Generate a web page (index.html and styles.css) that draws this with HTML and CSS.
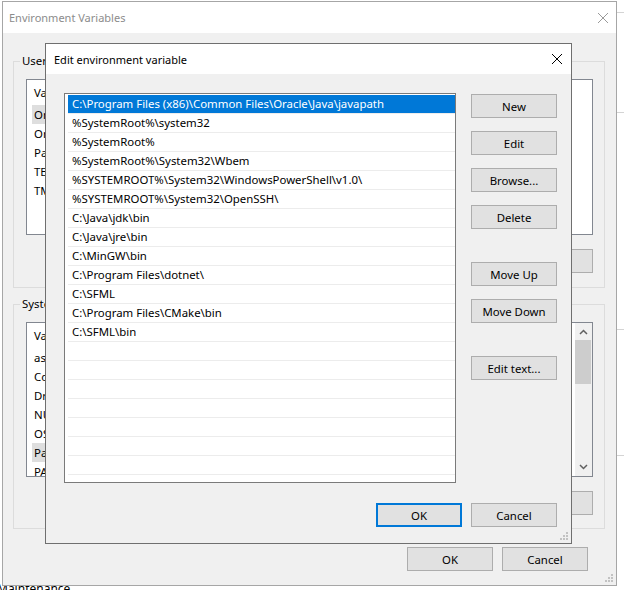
FILE: index.html
```html
<!DOCTYPE html>
<html>
<head>
	<title>Edit environment variable</title>
	<link rel="stylesheet" href="styles.css">
</head>
<body>
	<div class="desk">
		<div class="hline h1"></div>
		<div class="hline h2"></div>
		<div class="hline h3"></div>
		<div class="hline h4"></div>
		<div class="maint">Maintenance</div>

		<div class="window env">
			<div class="titlebar">
				<span class="title">Environment Variables</span>
				<svg class="close" width="10" height="10" viewBox="0 0 10 10"><path d="M0 0L10 10M10 0L0 10" stroke="#9a9a9a" stroke-width="1"/></svg>
			</div>
			<div class="env-body">
				<div class="group user">
					<span class="legend">User variables for user</span>
					<div class="varlist">
						<div class="rows">
							<div class="varhead"><span class="col1">Variable</span><span>Value</span></div>
							<div class="varrow sel"><span class="col1">OneDrive</span><span>C:\Users\user\OneDrive</span></div>
							<div class="varrow"><span class="col1">OneDriveConsumer</span><span>C:\Users\user\OneDrive</span></div>
							<div class="varrow"><span class="col1">Path</span><span>C:\Users\user\AppData\Local\Microsoft\WindowsApps;</span></div>
							<div class="varrow"><span class="col1">TEMP</span><span>C:\Users\user\AppData\Local\Temp</span></div>
							<div class="varrow"><span class="col1">TMP</span><span>C:\Users\user\AppData\Local\Temp</span></div>
						</div>
					</div>
					<div class="btnrow">
						<button class="btn">New...</button>
						<button class="btn">Edit...</button>
						<button class="btn">Delete</button>
					</div>
				</div>

				<div class="group system">
					<span class="legend">System variables</span>
					<div class="varlist">
						<div class="rows">
							<div class="varhead"><span class="col1">Variable</span><span>Value</span></div>
							<div class="varrow"><span class="col1">asl.log</span><span>Destination=file</span></div>
							<div class="varrow"><span class="col1">ComSpec</span><span>C:\WINDOWS\system32\cmd.exe</span></div>
							<div class="varrow"><span class="col1">DriverData</span><span>C:\Windows\System32\Drivers\DriverData</span></div>
							<div class="varrow"><span class="col1">NUMBER_OF_PROCESSORS</span><span>4</span></div>
							<div class="varrow"><span class="col1">OS</span><span>Windows_NT</span></div>
							<div class="varrow sel"><span class="col1">Path</span><span>C:\Program Files (x86)\Common Files\Oracle\Java\javapath;</span></div>
							<div class="varrow"><span class="col1">PATHEXT</span><span>.COM;.EXE;.BAT;.CMD;.VBS;.VBE;.JS;.JSE;.WSF;.WSH;.MSC</span></div>
						</div>
						<div class="vscroll">
							<div class="sb-btn"><svg width="17" height="17" viewBox="0 0 17 17"><path d="M5 11L8.5 7.5L12 11" fill="none" stroke="#606060" stroke-width="1.5"/></svg></div>
							<div class="sb-thumb"></div>
							<div class="sb-track"></div>
							<div class="sb-btn"><svg width="17" height="17" viewBox="0 0 17 17"><path d="M5 6L8.5 9.5L12 6" fill="none" stroke="#606060" stroke-width="1.5"/></svg></div>
						</div>
					</div>
					<div class="btnrow">
						<button class="btn">New...</button>
						<button class="btn">Edit...</button>
						<button class="btn">Delete</button>
					</div>
				</div>

				<div class="btnrow bottom">
					<button class="btn">OK</button>
					<button class="btn">Cancel</button>
				</div>
			</div>
			<svg class="grip" width="8" height="8" viewBox="0 0 8 8"><path d="M6 0h2v2h-2zM6 3h2v2h-2zM3 3h2v2h-2zM6 6h2v2h-2zM3 6h2v2h-2zM0 6h2v2h-2z" fill="#c2c2c2"/></svg>
		</div>

		<div class="window edit">
			<div class="titlebar">
				<span class="title">Edit environment variable</span>
				<svg class="close" width="10" height="10" viewBox="0 0 10 10"><path d="M0 0L10 10M10 0L0 10" stroke="#000" stroke-width="1"/></svg>
			</div>
			<div class="edit-body">
				<div class="edit-main">
					<div class="pathlist">
						<div class="pathrow sel">C:\Program Files (x86)\Common Files\Oracle\Java\javapath</div>
						<div class="pathrow">%SystemRoot%\system32</div>
						<div class="pathrow">%SystemRoot%</div>
						<div class="pathrow">%SystemRoot%\System32\Wbem</div>
						<div class="pathrow">%SYSTEMROOT%\System32\WindowsPowerShell\v1.0\</div>
						<div class="pathrow">%SYSTEMROOT%\System32\OpenSSH\</div>
						<div class="pathrow">C:\Java\jdk\bin</div>
						<div class="pathrow">C:\Java\jre\bin</div>
						<div class="pathrow">C:\MinGW\bin</div>
						<div class="pathrow">C:\Program Files\dotnet\</div>
						<div class="pathrow">C:\SFML</div>
						<div class="pathrow">C:\Program Files\CMake\bin</div>
						<div class="pathrow">C:\SFML\bin</div>
						<div class="pathrow"></div>
						<div class="pathrow"></div>
						<div class="pathrow"></div>
						<div class="pathrow"></div>
						<div class="pathrow"></div>
						<div class="pathrow"></div>
						<div class="pathrow"></div>
						<div class="pathrow"></div>
					</div>
					<div class="sidebtns">
						<button class="btn">New</button>
						<button class="btn">Edit</button>
						<button class="btn">Browse...</button>
						<button class="btn">Delete</button>
						<button class="btn sep">Move Up</button>
						<button class="btn">Move Down</button>
						<button class="btn sep">Edit text...</button>
					</div>
				</div>
				<div class="btnrow dlg">
					<button class="btn default">OK</button>
					<button class="btn">Cancel</button>
				</div>
			</div>
			<svg class="grip" width="8" height="8" viewBox="0 0 8 8"><path d="M6 0h2v2h-2zM6 3h2v2h-2zM3 3h2v2h-2zM6 6h2v2h-2zM3 6h2v2h-2zM0 6h2v2h-2z" fill="#c2c2c2"/></svg>
		</div>
	</div>
</body>
</html>
```

FILE: styles.css
```css
* {
	box-sizing: border-box;
}
body {
	margin: 0;
	font-family: "Noto Sans", "Segoe UI", sans-serif;
	font-size: 11.4px;
	color: #000;
	background: #fff;
}
.desk {
	position: relative;
	width: 624px;
	height: 590px;
	overflow: hidden;
}

/* things from windows behind */
.hline {
	position: absolute;
	left: 617px;
	width: 7px;
	height: 1px;
	background: #d4d4d4;
}
.h1 { top: 12px; }
.h2 { top: 112px; }
.h3 { top: 329px; }
.h4 { top: 455px; }
.maint {
	position: absolute;
	left: -3px;
	top: 581px;
	font-size: 12px;
	line-height: 16px;
}

/* windows */
.window {
	position: absolute;
	display: flex;
	flex-direction: column;
	background: #f0f0f0;
}
.titlebar {
	display: flex;
	align-items: center;
	justify-content: space-between;
	background: #fff;
	flex-shrink: 0;
	font-size: 11px;
}
.grip {
	position: absolute;
	right: 3px;
	bottom: 3px;
}

.env {
	left: 2px;
	top: 1px;
	width: 615px;
	height: 585px;
	border: 1px solid #a6a6a6;
}
.env .titlebar {
	height: 31px;
	padding: 0 8px 0 6px;
}
.env .title {
	color: #8c8c8c;
}
.env-body {
	padding: 0 11px 0 10px;
}

.group {
	position: relative;
	border: 1px solid #dcdcdc;
	padding: 17px 11px 14px 12px;
}
.group.user {
	margin-top: 28px;
}
.group.system {
	margin-top: 16px;
	padding-bottom: 13px;
}
.legend {
	position: absolute;
	left: 6px;
	top: -9px;
	padding: 0 2px;
	line-height: 16px;
	background: #f0f0f0;
}

.varlist {
	display: flex;
	border: 1px solid #828790;
	background: #fff;
	height: 156px;
	overflow: hidden;
}
.system .varlist {
	height: 155px;
}
.rows {
	flex: 1;
	padding-left: 5px;
	overflow: hidden;
	white-space: nowrap;
}
.varhead {
	height: 25px;
	line-height: 25px;
}
.varrow {
	height: 19px;
	line-height: 19px;
}
.col1 {
	display: inline-block;
	width: 150px;
	padding-left: 2px;
}
.varrow.sel .col1 {
	background: #dedede;
}

.vscroll {
	width: 17px;
	display: flex;
	flex-direction: column;
	background: #f0f0f0;
}
.sb-btn {
	height: 17px;
}
.sb-btn svg {
	display: block;
}
.sb-thumb {
	height: 44px;
	margin: 0 1px 0 0;
	background: #cdcdcd;
}
.sb-track {
	flex: 1;
}

.btnrow {
	display: flex;
	justify-content: flex-end;
	gap: 9px;
	margin-top: 14px;
}
.btnrow.bottom {
	margin-top: 18px;
	margin-right: 17px;
}
.btn {
	width: 86px;
	height: 24px;
	padding: 0;
	background: #e1e1e1;
	border: 1px solid #adadad;
	font-family: inherit;
	font-size: 11.4px;
	color: #000;
}
.btn.default {
	border: 2px solid #0078d7;
}

/* edit dialog */
.edit {
	left: 45px;
	top: 43px;
	width: 527px;
	height: 501px;
	border: 1px solid #6f6f6f;
}
.edit .titlebar {
	height: 30px;
	padding: 0 9px 0 8px;
}
.edit-body {
	padding: 19px 14px 16px 18px;
}
.edit-main {
	display: flex;
}
.pathlist {
	width: 392px;
	height: 390px;
	border: 1px solid #7a7a7a;
	background: #fff;
	padding: 1px 0 0 3px;
	overflow: hidden;
	white-space: nowrap;
}
.pathrow {
	height: 19px;
	line-height: 18px;
	padding-left: 4px;
	border-bottom: 1px solid #ececec;
}
.pathrow.sel {
	background: #0078d7;
	color: #fff;
}
.sidebtns {
	display: flex;
	flex-direction: column;
	margin-left: 15px;
	padding-top: 1px;
}
.sidebtns .btn + .btn {
	margin-top: 13px;
}
.sidebtns .btn.sep {
	margin-top: 33px;
}
.btnrow.dlg {
	margin-top: 20px;
}
```
